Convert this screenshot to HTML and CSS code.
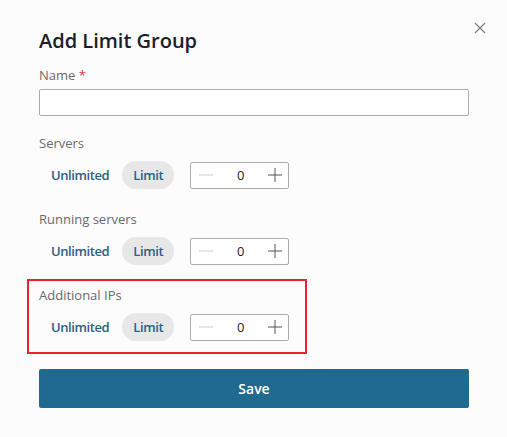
FILE: index.html
```html
<!DOCTYPE html>
<html lang="en">
<head>
<meta charset="utf-8">
<title>Add Limit Group</title>
<link rel="stylesheet" href="styles.css">
</head>
<body>
<div class="dialog">
  <button class="close" aria-label="Close">
    <svg width="12" height="12" viewBox="0 0 12 12"><path d="M1 1L11 11M11 1L1 11" stroke="#7a7a7a" stroke-width="1.2" fill="none"/></svg>
  </button>
  <h1 class="title">Add Limit Group</h1>
  <label class="label label-name">Name <span class="req">*</span></label>
  <input class="text-input" type="text">

  <div class="section section-first">
    <div class="label">Servers</div>
    <div class="row">
      <span class="opt">Unlimited</span>
      <span class="opt opt-active">Limit</span>
      <div class="stepper">
        <span class="step step-minus"><svg width="14" height="2" viewBox="0 0 14 2"><path d="M0 1H14" stroke="#cfcfcf" stroke-width="1"/></svg></span>
        <span class="step-val">0</span>
        <span class="step step-plus"><svg width="14" height="14" viewBox="0 0 14 14"><path d="M0 7H14M7 0V14" stroke="#555" stroke-width="1"/></svg></span>
      </div>
    </div>
  </div>

  <div class="section">
    <div class="label">Running servers</div>
    <div class="row">
      <span class="opt">Unlimited</span>
      <span class="opt opt-active">Limit</span>
      <div class="stepper">
        <span class="step step-minus"><svg width="14" height="2" viewBox="0 0 14 2"><path d="M0 1H14" stroke="#cfcfcf" stroke-width="1"/></svg></span>
        <span class="step-val">0</span>
        <span class="step step-plus"><svg width="14" height="14" viewBox="0 0 14 14"><path d="M0 7H14M7 0V14" stroke="#555" stroke-width="1"/></svg></span>
      </div>
    </div>
  </div>

  <div class="section section-highlight">
    <div class="label">Additional IPs</div>
    <div class="row">
      <span class="opt">Unlimited</span>
      <span class="opt opt-active">Limit</span>
      <div class="stepper">
        <span class="step step-minus"><svg width="14" height="2" viewBox="0 0 14 2"><path d="M0 1H14" stroke="#cfcfcf" stroke-width="1"/></svg></span>
        <span class="step-val">0</span>
        <span class="step step-plus"><svg width="14" height="14" viewBox="0 0 14 14"><path d="M0 7H14M7 0V14" stroke="#555" stroke-width="1"/></svg></span>
      </div>
    </div>
  </div>

  <button class="save">Save</button>
</div>
</body>
</html>
```
FILE: styles.css
```css
* { box-sizing: border-box; }
html, body {
  margin: 0;
  background: #fcfcfc;
}
body {
  font-family: "Open Sans", "Noto Sans", sans-serif;
  color: #222;
}
.dialog {
  position: relative;
  padding: 27px 38px 0 39px;
  width: 507px;
  height: 437px;
}
.close {
  position: absolute;
  top: 22px;
  left: 474px;
  width: 12px;
  height: 12px;
  padding: 0;
  border: 0;
  background: transparent;
  display: flex;
}
.title {
  margin: 0;
  font-size: 20px;
  line-height: 28px;
  font-weight: 600;
  color: #1b1d2b;
}
.label {
  display: block;
  font-size: 13px;
  line-height: 18px;
  color: #6a6a6a;
}
.label-name { margin-top: 11px; }
.req { color: #d9314e; }
.text-input {
  display: block;
  margin-top: 5px;
  width: 430px;
  height: 27px;
  border: 1px solid #acacac;
  border-radius: 2px;
  background: #fff;
}
.section {
  display: flex;
  flex-direction: column;
  gap: 9px;
  margin-top: 21px;
}
.section-first { margin-top: 18px; }
.section-highlight {
  width: fit-content;
  margin-top: 14px;
  margin-left: -12px;
  padding: 5px 16px 11px 10px;
  border: 2px solid #e8212c;
}
.row {
  display: flex;
  align-items: center;
  height: 28px;
}
.opt {
  display: flex;
  align-items: center;
  height: 28px;
  padding: 0 12px;
  font-size: 13px;
  font-weight: 600;
  letter-spacing: -0.4px;
  color: #2a6185;
  border-radius: 14px;
}
.opt-active {
  margin-left: 1px;
  padding: 0 11px;
  background: #e7e7e7;
}
.stepper {
  display: flex;
  align-items: center;
  justify-content: space-between;
  margin-left: 16px;
  width: 99px;
  height: 27px;
  padding: 0 6px 0 8px;
  border: 1px solid #acacac;
  border-radius: 2px;
  background: #fff;
}
.step { display: flex; }
.step-val {
  font-size: 13px;
  color: #222;
}
.save {
  display: block;
  margin-top: 15px;
  width: 430px;
  height: 39px;
  border: 0;
  border-radius: 2px;
  background: #1f6a8e;
  color: #fff;
  font-family: inherit;
  font-size: 14px;
  font-weight: 600;
}
```
